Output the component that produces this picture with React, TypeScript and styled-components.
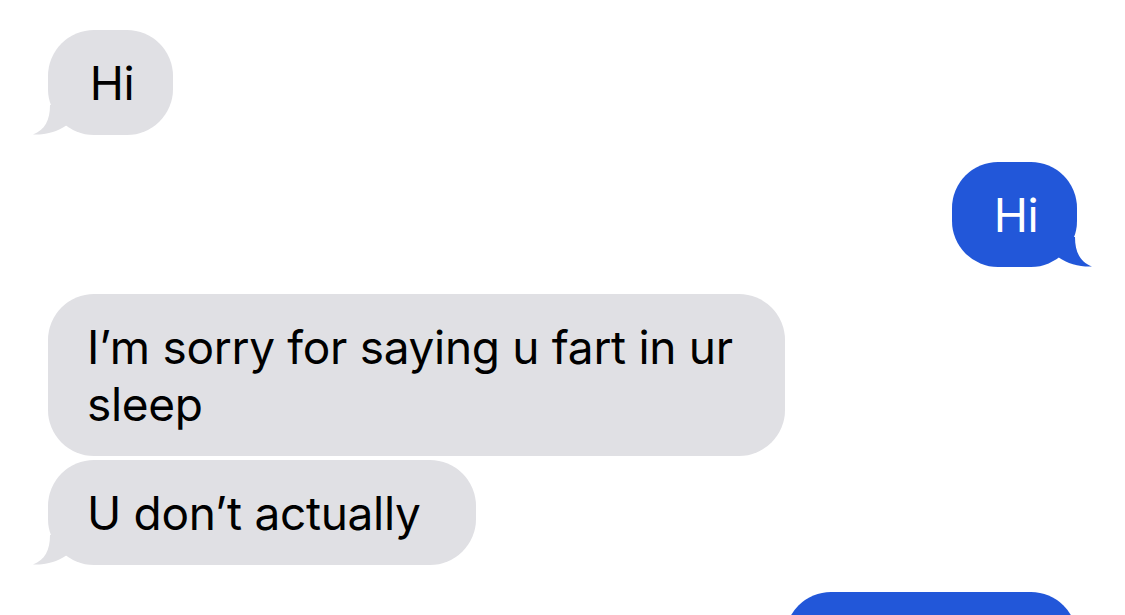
import React from "react";
import styled, { createGlobalStyle } from "styled-components";

const Global = createGlobalStyle`
  html, body {
    margin: 0;
    padding: 0;
    background: #ffffff;
    overflow: hidden;
  }
  body {
    font-family: Inter, "Noto Sans", "Liberation Sans", sans-serif;
  }
`;

const Thread = styled.div`
  display: flex;
  flex-direction: column;
  padding: 30px 48px 0 48px;
  width: 1125px;
  height: 615px;
  box-sizing: border-box;
`;

const Group = styled.div<{ $out?: boolean }>`
  display: flex;
  flex-direction: column;
  align-items: ${(p) => (p.$out ? "flex-end" : "flex-start")};
  gap: 4px;
  margin-bottom: 27px;
`;

const Bubble = styled.div<{ $out?: boolean; $w?: number; $padR?: number }>`
  position: relative;
  box-sizing: border-box;
  max-width: 737px;
  min-height: 105px;
  width: ${(p) => (p.$w ? `${p.$w}px` : "auto")};
  padding: 25px ${(p) => (p.$w ? 0 : p.$padR ?? 55)}px 23px
    ${(p) => (p.$w ? 3 : 39)}px;
  border-radius: 46px;
  background: ${(p) => (p.$out ? "#2257d9" : "#e0e0e4")};
  color: ${(p) => (p.$out ? "#ffffff" : "#000000")};
  font-size: 46px;
  line-height: 57px;
  letter-spacing: -0.3px;
  text-align: ${(p) => (p.$w ? "center" : "left")};
`;

const Tail = styled.svg<{ $out?: boolean }>`
  position: absolute;
  bottom: 0;
  width: 40px;
  height: 30px;
  ${(p) =>
    p.$out
      ? "right: -16px; transform: scaleX(-1);"
      : "left: -16px;"}
`;

const TailShape = ({ out }: { out?: boolean }) => (
  <Tail $out={out} viewBox="0 0 40 30" aria-hidden="true">
    <path
      d="M18 0 C18 15 13 25 1 29.5 C13 30 25 27 35 20 L35 0 Z"
      fill={out ? "#2257d9" : "#e0e0e4"}
    />
  </Tail>
);

export default function App() {
  return (
    <>
      <Global />
      <Thread>
        <Group>
          <Bubble $w={125}>
            Hi
            <TailShape />
          </Bubble>
        </Group>
        <Group $out>
          <Bubble $out $w={125}>
            Hi
            <TailShape out />
          </Bubble>
        </Group>
        <Group>
          <Bubble $padR={30}>I’m sorry for saying u fart in ur sleep</Bubble>
          <Bubble>
            U don’t actually
            <TailShape />
          </Bubble>
        </Group>
        <Group $out>
          <Bubble $out $w={292} aria-hidden="true" />
        </Group>
      </Thread>
    </>
  );
}
